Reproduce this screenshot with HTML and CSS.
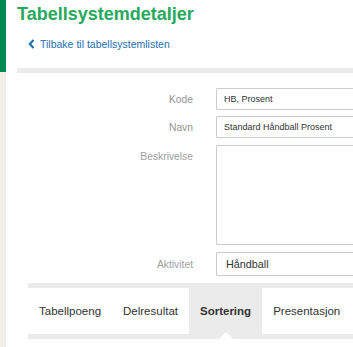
FILE: index.html
```html
<!DOCTYPE html>
<html lang="no">
<head>
<meta charset="utf-8">
<title>Tabellsystemdetaljer</title>
<link rel="stylesheet" href="styles.css">
</head>
<body>
<div class="layout">
  <aside class="sidebar">
    <div class="sidebar-top"></div>
    <div class="sidebar-rest"></div>
  </aside>
  <main class="main">
    <h1 class="title">Tabellsystemdetaljer</h1>
    <a class="back" href="#">
      <svg class="chev" width="7" height="10" viewBox="0 0 7 10"><polyline points="5.5,1 1.8,5 5.5,9" fill="none" stroke="#1f6fb2" stroke-width="2.2"/></svg>
      <span>Tilbake til tabellsystemlisten</span>
    </a>
    <div class="band band-top"></div>
    <form class="form">
      <label class="lbl lbl-kode">Kode</label>
      <div class="field"><input class="inp inp-kode" type="text" value="HB, Prosent"></div>
      <label class="lbl lbl-navn">Navn</label>
      <div class="field"><input class="inp inp-navn" type="text" value="Standard Håndball Prosent"></div>
      <label class="lbl lbl-top lbl-besk">Beskrivelse</label>
      <div class="field"><textarea class="ta"></textarea></div>
      <label class="lbl lbl-akt">Aktivitet</label>
      <div class="field"><div class="select">Håndball</div></div>
    </form>
    <section class="tabs-wrap">
      <div class="band"></div>
      <nav class="tabs">
        <a class="tab" href="#">Tabellpoeng</a>
        <a class="tab" href="#">Delresultat</a>
        <a class="tab active" href="#">Sortering</a>
        <a class="tab" href="#">Presentasjon</a>
      </nav>
      <div class="band"></div>
    </section>
  </main>
</div>
</body>
</html>
```

FILE: styles.css
```css
html, body {
  margin: 0;
  padding: 0;
  overflow: hidden;
  background: #fff;
  font-family: "Liberation Sans", Arial, sans-serif;
  color: #333;
}

.layout {
  display: flex;
  min-height: 347px;
}

.sidebar {
  width: 6px;
  flex: 0 0 6px;
  display: flex;
  flex-direction: column;
}

.sidebar-top {
  height: 72px;
  background: #008a4f;
}

.sidebar-rest {
  flex: 1;
  background: #f2efea;
}

.main {
  flex: 1;
  min-width: 0;
  padding-left: 11px;
  overflow: hidden;
}

.title {
  margin: 3px 0 0;
  font-size: 18px;
  line-height: 22px;
  font-weight: bold;
  color: #26a95c;
  white-space: nowrap;
}

.back {
  display: flex;
  align-items: center;
  gap: 5px;
  margin: 12px 0 0 11px;
  height: 14px;
  font-size: 10.5px;
  line-height: 14px;
  color: #1f6fb2;
  text-decoration: none;
  white-space: nowrap;
}

.chev {
  display: block;
}

.band {
  height: 5px;
  background: #ebebeb;
}

.band-top {
  margin-top: 17px;
}

.form {
  display: grid;
  grid-template-columns: 176px minmax(0, 1fr);
  column-gap: 23px;
  row-gap: 6px;
  margin-top: 15px;
}

.lbl {
  text-align: right;
  font-size: 10.3px;
  color: #a0a0a0;
  align-self: center;
  white-space: nowrap;
}

.lbl-kode, .lbl-navn {
  color: #959595;
}

.lbl-top {
  align-self: start;
  margin-top: 7px;
}

.lbl-akt {
  margin-top: 1px;
}

.field {
  min-width: 0;
}

.inp {
  box-sizing: border-box;
  display: block;
  width: 100%;
  height: 22px;
  margin: 0;
  padding: 0 7px;
  border: 1px solid #ccc;
  border-right: none;
  border-radius: 2px 0 0 2px;
  font-family: "Liberation Sans", Arial, sans-serif;
  font-size: 9px;
  color: #333;
  background: #fff;
  outline: none;
}

.ta {
  box-sizing: border-box;
  display: block;
  width: 100%;
  height: 100px;
  margin: 1px 0 0;
  padding: 4px 7px;
  border: 1px solid #ccc;
  border-right: none;
  border-radius: 2px 0 0 2px;
  resize: none;
  background: #fff;
  outline: none;
}

.select {
  box-sizing: border-box;
  height: 24px;
  margin-top: 1px;
  padding: 0 9px;
  border: 1px solid #ccc;
  border-right: none;
  border-radius: 2px 0 0 2px;
  font-size: 10.8px;
  line-height: 22px;
  color: #333;
  white-space: nowrap;
}

.tabs-wrap {
  margin: 7px 0 0 11px;
}

.tabs {
  display: flex;
  height: 46px;
  background: #fff;
}

.tab {
  position: relative;
  display: flex;
  align-items: center;
  padding: 0 11px;
  font-size: 11.5px;
  color: #333;
  text-decoration: none;
  white-space: nowrap;
}

.tab.active {
  background: #ebebeb;
  font-weight: bold;
}

.tab.active::after {
  content: "";
  position: absolute;
  left: 50%;
  bottom: -6px;
  margin-left: -8px;
  border-left: 8px solid transparent;
  border-right: 8px solid transparent;
  border-bottom: 8px solid #fff;
}
```
